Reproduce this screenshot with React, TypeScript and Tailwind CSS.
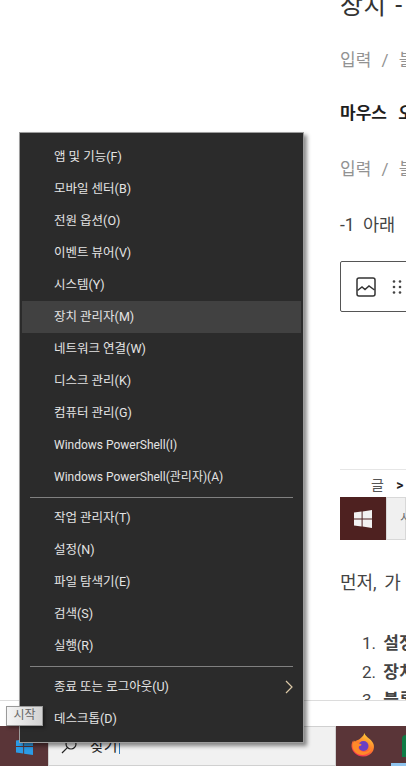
const groupA = [
  "앱 및 기능(F)",
  "모바일 센터(B)",
  "전원 옵션(O)",
  "이벤트 뷰어(V)",
  "시스템(Y)",
  "장치 관리자(M)",
  "네트워크 연결(W)",
  "디스크 관리(K)",
  "컴퓨터 관리(G)",
  "Windows PowerShell(I)",
  "Windows PowerShell(관리자)(A)",
];
const groupB = ["작업 관리자(T)", "설정(N)", "파일 탐색기(E)", "검색(S)", "실행(R)"];

const font = "font-['Roboto','Noto_Sans_CJK_KR',sans-serif]";

const MenuRow = ({ label, active }: { label: string; active?: boolean }) => (
  <div
    className={`h-8 flex items-center pl-[32px] text-[#e4e4e4] ${
      label.startsWith("Windows") ? "text-[12px]" : "text-[12.5px]"
    } ${active ? "bg-[#414141]" : ""}`}
  >
    {label}
  </div>
);

const WinLogo = ({ fill, className }: { fill: string; className: string }) => (
  <svg viewBox="0 0 18 18" className={className}>
    <path fill={fill} d="M0 2.6 7.6 1.5v7H0zM8.6 1.4 18 0v8.5H8.6zM0 9.5h7.6v7L0 15.4zM8.6 9.5H18V18l-9.4-1.4z" />
  </svg>
);

const Firefox = () => (
  <svg viewBox="0 0 24 24" className="w-[24px] h-[24px]">
    <defs>
      <linearGradient id="ff" x1="0.7" y1="0" x2="0.2" y2="1">
        <stop offset="0" stopColor="#ffd23a" />
        <stop offset="0.5" stopColor="#ff7a2a" />
        <stop offset="1" stopColor="#f2255f" />
      </linearGradient>
    </defs>
    <path
      fill="url(#ff)"
      d="M13.500 0c.4 2.500 2.800 3.800 4.800 5.800 2.300 1.900 3.500 3.400 4.200 5.200.8 2.200.5 5-.5 7-1.900 3.500-5.500 5.500-10 5.500-6 0-11-4.500-11.500-10-.1-1.500.1-3 .8-4.500.4-.8.800-1.200 1.200-1.500 0 1 .3 2 .9 2.500.7-1.500 2.100-2.800 3.600-3C9 5.800 12.500 3.500 13.500 0z"
    />
    <circle cx="12.500" cy="13" r="5" fill="#6b3fc4" />
    <path fill="#ff8a2a" d="M4 7.500c1 2.500 3 3 5 3.300 1.200.2 1.800.8 1.300 1.500-.5.7-2.800.7-2.800 2.200 0 2.500 3 4.300 5.800 4.300 3.500 0 6.500-2.300 7.700-5.300-.2 4.500-4.300 8.500-9.500 8.500-5 0-9.500-3.500-10-8.500-.1-2.500.8-4.500 2.500-6z" />
  </svg>
);

export default function App() {
  return (
    <div className={`relative w-[406px] h-[766px] overflow-hidden bg-white flex flex-col ${font}`}>
      {/* blog editor behind the menu */}
      <div className="h-[700px] pl-[340px] overflow-hidden whitespace-nowrap text-[17px] [word-spacing:3px] text-[#444]">
        <h2 className="text-[25px] leading-[30px] -mt-[9px] text-[#333]">장치 - 관리자</h2>
        <p className="mt-[27px] leading-[24px] text-[#929292] [word-spacing:6px]">입력 / 블록 선택</p>
        <p className="mt-[29px] leading-[24px] font-bold text-[17px] [word-spacing:7px] text-[#1e1e1e]">마우스 오른쪽</p>
        <p className="mt-[32px] leading-[24px] text-[#929292] [word-spacing:6px]">입력 / 블록 선택</p>
        <p className="mt-[32px] leading-[24px] text-[17.5px] [word-spacing:4px]">-1 아래</p>
        <div className="mt-[24px] w-[120px] h-[51px] border border-[#555] rounded-[2px] flex items-center pl-[15px] gap-[16px]">
          <svg viewBox="0 0 20 20" className="w-[20px] h-[20px] text-[#333]" fill="none" stroke="currentColor" strokeWidth="1.500">
            <rect x="1" y="1" width="18" height="18" rx="2" />
            <path d="M1.500 13.500 6 10l3 2.500 4-3.500 5.500 4" />
          </svg>
          <svg viewBox="0 0 10 16" className="w-[10px] h-[16px]" fill="#444">
            <circle cx="2" cy="2.500" r="1.300" />
            <circle cx="8" cy="2.500" r="1.300" />
            <circle cx="2" cy="8" r="1.300" />
            <circle cx="8" cy="8" r="1.300" />
            <circle cx="2" cy="13.500" r="1.300" />
            <circle cx="8" cy="13.500" r="1.300" />
          </svg>
        </div>
        <div className="mt-[157px] border-t border-[#e6e6e6] pt-[4px] pl-[31px] h-[28px] text-[14px] leading-[22px] text-[#555]">
          글 <span className="font-bold text-[#222] ml-[6px]">&gt;</span>
        </div>
        <div className="flex h-[43px]">
          <div className="w-[51px] bg-[#4e2120] flex items-center justify-center">
            <WinLogo fill="#f2f2f2" className="w-[18px] h-[18px]" />
          </div>
          <div className="w-[20px] bg-[#f0f0f0] border border-[#d8d8d8] pl-[13px] text-[12px] leading-[40px] text-[#666]">시</div>
        </div>
        <p className="mt-[31px] leading-[24px] text-[18px]">먼저, 가</p>
        <ol className="mt-[34px] pl-[22px]">
          <li className="h-[28.5px] leading-[28px]">1. <b>설정</b></li>
          <li className="h-[28.5px] leading-[28px]">2. <b>장치</b></li>
          <li className="h-[28.5px] leading-[28px]">3. <b>블록</b></li>
        </ol>
      </div>

      <div className="h-[26px] border-t border-[#dcdcdc]" />

      {/* taskbar */}
      <div className="h-[40px] bg-[#5a3538] flex">
        <div className="w-[48px] flex justify-center pt-[12px]">
          <WinLogo fill="#2b9be6" className="w-[17px] h-[17px]" />
        </div>
        <div className="w-[288px] bg-[#f1f1f1] border border-[#d0d0d0] flex items-center pl-[12px] text-[15px] text-[#222]">
          <svg viewBox="0 0 16 16" className="w-[16px] h-[16px]" fill="none" stroke="#222" strokeWidth="1.200">
            <circle cx="10" cy="6" r="5" />
            <path d="M6.400 9.600 1 15" />
          </svg>
          <span className="ml-[13px]">찾기</span>
          <span className="ml-[1px] w-[1px] h-[16px] bg-[#2b7bc0]" />
        </div>
        <div className="pl-[15px] pt-[7px] w-[55px]">
          <Firefox />
        </div>
        <div className="flex-1 relative overflow-hidden">
          <div className="absolute left-[11px] top-[9px] w-[24px] h-[22px] rounded-t-[4px] bg-[#0f7b45]" />
          <div className="absolute bottom-0 left-0 right-0 h-[3px] bg-[#8fc4ee]" />
        </div>
      </div>

      {/* context menu */}
      <div className="absolute left-[19px] top-[132px] w-[285px] h-[611px] bg-[#2b2b2b] border border-[#9c9c9c] shadow-[3px_3px_4px_rgba(0,0,0,0.45)] pt-[8px] px-[2px]">
        {groupA.map((label) => (
          <MenuRow key={label} label={label} active={label === "장치 관리자(M)"} />
        ))}
        <div className="h-[1px] mt-[4px] mb-[4px] mx-[8px] bg-[#808080]" />
        {groupB.map((label) => (
          <MenuRow key={label} label={label} />
        ))}
        <div className="h-[1px] mt-[4px] mb-[4px] mx-[8px] bg-[#808080]" />
        <div className="relative">
          <MenuRow label="종료 또는 로그아웃(U)" />
          <svg viewBox="0 0 8 14" className="absolute right-[8px] top-[9px] w-[8px] h-[14px]" fill="none" stroke="#dcc9a8" strokeWidth="1.200">
            <path d="M1 1l6 6-6 6" />
          </svg>
        </div>
        <MenuRow label="데스크톱(D)" />
      </div>

      {/* tooltip */}
      <div className="absolute left-[6px] top-[706px] w-[37px] h-[20px] bg-linear-to-r from-[#f5f5f5] to-[#d2d2d2] border border-[#9a9a9a] shadow-[2px_2px_3px_rgba(0,0,0,0.35)] text-[12px] leading-[17px] text-center text-[#666]">
        시작
      </div>
    </div>
  );
}
